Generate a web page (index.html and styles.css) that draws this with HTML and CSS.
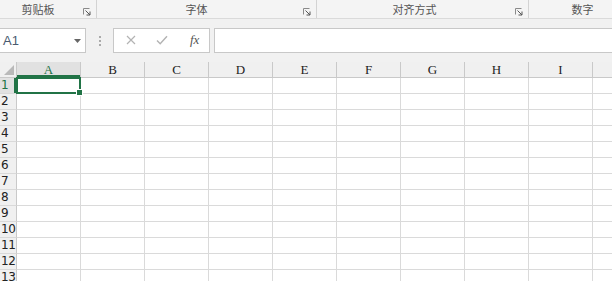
FILE: index.html
```html
<!DOCTYPE html>
<html lang="zh">
<head>
<meta charset="utf-8">
<link rel="stylesheet" href="styles.css">
</head>
<body>
<div class="ribbon">
  <div class="group g1"><span class="glabel">剪贴板</span><svg class="launch" viewBox="0 0 8 8" width="8" height="8"><path d="M0.5 6.5V0.5H6.5" fill="none" stroke="#8a8a8a"/><path d="M2.5 2.5L7 7M7 3.5V7H3.5" fill="none" stroke="#555"/></svg></div>
  <div class="group g2"><span class="glabel">字体</span><svg class="launch" viewBox="0 0 8 8" width="8" height="8"><path d="M0.5 6.5V0.5H6.5" fill="none" stroke="#8a8a8a"/><path d="M2.5 2.5L7 7M7 3.5V7H3.5" fill="none" stroke="#555"/></svg></div>
  <div class="group g3"><span class="glabel">对齐方式</span><svg class="launch" viewBox="0 0 8 8" width="8" height="8"><path d="M0.5 6.5V0.5H6.5" fill="none" stroke="#8a8a8a"/><path d="M2.5 2.5L7 7M7 3.5V7H3.5" fill="none" stroke="#555"/></svg></div>
  <div class="group g4"><span class="glabel">数字</span></div>
</div>
<div class="fbar">
  <div class="namebox"><span class="nametext">A1</span><svg class="dd" viewBox="0 0 7 4" width="7" height="4"><path d="M0 0H7L3.5 4Z" fill="#666"/></svg></div>
  <div class="dots"><i></i><i></i><i></i></div>
  <div class="fbtns">
    <svg class="btn" viewBox="0 0 10 10" width="10" height="10"><path d="M1 1L9 9M9 1L1 9" stroke="#b3b3b3" stroke-width="1.2" fill="none"/></svg>
    <svg class="btn" viewBox="0 0 12 10" width="12" height="10"><path d="M1 5.5L4.2 8.8L11 1.2" stroke="#b3b3b3" stroke-width="1.4" fill="none"/></svg>
    <span class="fx">fx</span>
  </div>
  <div class="finput"></div>
</div>
<div class="sheet">
  <div class="corner"><svg viewBox="0 0 10 10" width="10" height="10"><path d="M10 0V10H0Z" fill="#b9b9b9"/></svg></div>
  <div class="ch sel">A</div><div class="ch">B</div><div class="ch">C</div><div class="ch">D</div><div class="ch">E</div><div class="ch">F</div><div class="ch">G</div><div class="ch">H</div><div class="ch">I</div><div class="ch"></div>
</div>
<div class="rows" id="rows"></div>
<script>
(function(){
  var rows=document.getElementById('rows');
  var html='';
  for(var r=1;r<=13;r++){
    html+='<div class="row"><div class="rh'+(r===1?' sel':'')+'">'+r+'</div>';
    for(var c=0;c<10;c++){
      html+='<div class="cell'+(r===1&&c===0?' active':'')+'"></div>';
    }
    html+='</div>';
  }
  rows.innerHTML=html;
})();
</script>
</body>
</html>
```
FILE: styles.css
```css
html, body {
  margin: 0;
  padding: 0;
  width: 612px;
  height: 281px;
  overflow: hidden;
  background: #ffffff;
  font-family: "Liberation Sans", "Noto Sans CJK SC", sans-serif;
}
.ribbon {
  display: flex;
  height: 19px;
  background: #f4f4f4;
  border-bottom: 1px solid #dadada;
  box-sizing: border-box;
}
.group {
  position: relative;
  display: flex;
  align-items: center;
  justify-content: center;
  height: 18px;
  border-right: 1px solid #d3d3d3;
  box-sizing: border-box;
  font-family: "Noto Sans CJK SC", sans-serif;
  font-size: 11px;
  color: #555555;
}
.g1 { width: 97px; }
.g2 { width: 220px; }
.g3 { width: 212px; }
.g4 { flex: 1; border-right: none; }
.glabel { line-height: 18px; }
.g1 .glabel { margin-left: -20px; }
.g2 .glabel { margin-left: -20px; }
.g3 .glabel { margin-left: -16px; }
.g4 .glabel { margin-left: 24px; }
.launch {
  position: absolute;
  right: 5px;
  top: 8px;
}
.fbar {
  display: flex;
  align-items: center;
  height: 43px;
  background: #f1f1f1;
  box-sizing: border-box;
}
.namebox {
  display: flex;
  align-items: center;
  justify-content: space-between;
  width: 86px;
  height: 25px;
  background: #ffffff;
  border: 1px solid #c8c8c8;
  border-left: none;
  box-sizing: border-box;
  padding: 0 4px 0 3px;
  margin-top: -1px;
}
.nametext {
  font-size: 13px;
  color: #4a5a70;
}
.dd { margin-top: 1px; }
.dots {
  display: flex;
  flex-direction: column;
  gap: 2px;
  width: 3px;
  margin: 0 11px 0 13px;
}
.dots i {
  display: block;
  width: 2px;
  height: 2px;
  background: #aaaaaa;
}
.fbtns {
  display: flex;
  align-items: center;
  width: 97px;
  height: 25px;
  background: #ffffff;
  border: 1px solid #c8c8c8;
  box-sizing: border-box;
  padding-left: 12px;
  margin-top: -1px;
}
.fbtns .btn:first-child { margin-right: 20px; }
.fbtns .btn:nth-child(2) { margin-right: 22px; }
.fx {
  font-family: "Liberation Serif", serif;
  font-style: italic;
  font-size: 13px;
  color: #555555;
}
.finput {
  flex: 1;
  height: 25px;
  margin-left: 4px;
  margin-top: -1px;
  background: #ffffff;
  border: 1px solid #c8c8c8;
  border-right: none;
  box-sizing: border-box;
}
.sheet {
  display: grid;
  grid-template-columns: 17px repeat(10, 64px);
  height: 15px;
  background: #f0f0f0;
  border-bottom: 1px solid #c9c9c9;
}
.corner {
  display: flex;
  align-items: flex-end;
  justify-content: flex-end;
  padding: 0 2px 2px 0;
  border-right: 1px solid #c9c9c9;
  box-sizing: border-box;
  background: #f0f0f0;
}
.ch {
  display: flex;
  align-items: center;
  justify-content: center;
  border-right: 1px solid #c9c9c9;
  box-sizing: border-box;
  font-family: "Liberation Serif", serif;
  font-size: 13px;
  color: #222222;
  line-height: 15px;
}
.ch.sel {
  background: #e1e1e1;
  color: #217346;
  box-shadow: inset 0 -2px 0 #217346;
}
.rows {
  display: flex;
  flex-direction: column;
}
.row {
  display: grid;
  grid-template-columns: 17px repeat(10, 64px);
  height: 16px;
}
.rh {
  background: #f0f0f0;
  border-right: 1px solid #c9c9c9;
  border-bottom: 1px solid #d9d9d9;
  box-sizing: border-box;
  font-family: "DejaVu Sans", sans-serif;
  font-size: 12px;
  line-height: 15px;
  color: #222222;
  padding-left: 1px;
  letter-spacing: -0.5px;
}
.rh.sel {
  background: #e1e1e1;
  color: #217346;
  box-shadow: inset -2px 0 0 #217346;
}
.cell {
  border-right: 1px solid #dadada;
  border-bottom: 1px solid #dadada;
  box-sizing: border-box;
  background: #ffffff;
}
.cell.active {
  position: relative;
  border: 2px solid #217346;
  margin: -1px 0 0 -1px;
  width: 65px;
  height: 17px;
}
.cell.active::after {
  content: "";
  position: absolute;
  right: -4px;
  bottom: -4px;
  width: 5px;
  height: 5px;
  background: #217346;
  border: 1px solid #ffffff;
}
```
